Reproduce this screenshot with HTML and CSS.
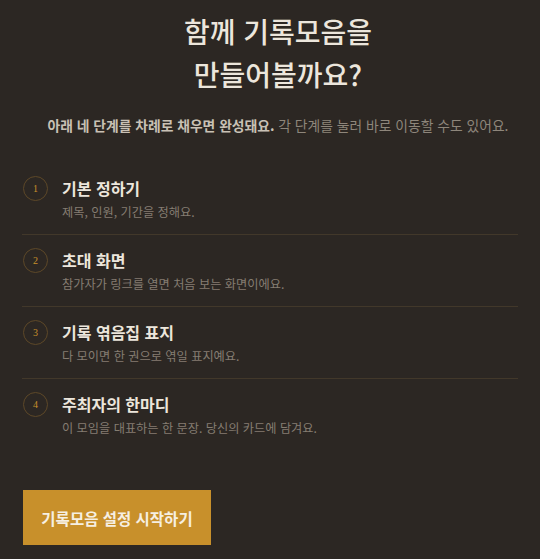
FILE: index.html
```html
<!DOCTYPE html>
<html lang="ko">
<head>
<meta charset="utf-8">
<link rel="stylesheet" href="styles.css">
</head>
<body>
<main class="page">
  <h1 class="title">함께 기록모음을<br>만들어볼까요?</h1>
  <p class="lead"><strong>아래 네 단계를 차례로 채우면 완성돼요.</strong> 각 단계를 눌러 바로 이동할 수도 있어요.</p>
  <ol class="steps">
    <li class="step">
      <span class="num">1</span>
      <div class="text"><div class="name">기본 정하기</div><div class="desc">제목, 인원, 기간을 정해요.</div></div>
    </li>
    <li class="step">
      <span class="num">2</span>
      <div class="text"><div class="name">초대 화면</div><div class="desc">참가자가 링크를 열면 처음 보는 화면이에요.</div></div>
    </li>
    <li class="step">
      <span class="num">3</span>
      <div class="text"><div class="name">기록 엮음집 표지</div><div class="desc">다 모이면 한 권으로 엮일 표지예요.</div></div>
    </li>
    <li class="step last">
      <span class="num">4</span>
      <div class="text"><div class="name">주최자의 한마디</div><div class="desc">이 모임을 대표하는 한 문장. 당신의 카드에 담겨요.</div></div>
    </li>
  </ol>
  <button class="start">기록모음 설정 시작하기</button>
</main>
</body>
</html>
```
FILE: styles.css
```css
html, body {
  margin: 0;
  padding: 0;
  background: #2c2723;
}
body {
  font-family: "Noto Sans CJK KR", "Noto Sans", sans-serif;
  color: #e8e2d8;
}
.page {
  padding: 10px 22px 0 22px;
}
.title {
  margin: 0;
  padding-left: 16px;
  text-align: center;
  font-size: 28px;
  font-weight: 500;
  line-height: 43px;
  color: #ece6dc;
}
.lead {
  margin: 19px 0 0;
  padding-left: 16px;
  text-align: center;
  font-size: 13.8px;
  line-height: 20px;
  color: #8e867b;
  white-space: nowrap;
}
.lead strong {
  font-weight: 700;
  color: #c9c1b5;
}
.steps {
  list-style: none;
  margin: 28px 0 0;
  padding: 0;
}
.step {
  display: flex;
  align-items: flex-start;
  gap: 14px;
  padding: 14px 0 0;
  border-bottom: 1px solid #42382a;
  height: 57px;
}
.step.last {
  border-bottom: none;
}
.num {
  flex: none;
  width: 25px;
  height: 25px;
  margin-top: -1px;
  margin-left: 1px;
  border: 1px solid #5d4828;
  border-radius: 50%;
  display: flex;
  align-items: center;
  justify-content: center;
  font-family: "Liberation Serif", serif;
  font-size: 10px;
  color: #c8902b;
  box-sizing: border-box;
}
.name {
  font-size: 16px;
  font-weight: 700;
  line-height: 22px;
  color: #ece6dc;
}
.desc {
  margin-top: 4px;
  font-size: 12.2px;
  line-height: 18px;
  color: #857d72;
}
.start {
  margin-top: 40px;
  width: 188px;
  height: 55px;
  border: none;
  border-radius: 0;
  background: #c8902b;
  color: #f6efe2;
  font-family: "Noto Sans CJK KR", "Noto Sans", sans-serif;
  font-size: 15.5px;
  font-weight: 700;
  padding: 0;
  margin-left: 1px;
}
```
